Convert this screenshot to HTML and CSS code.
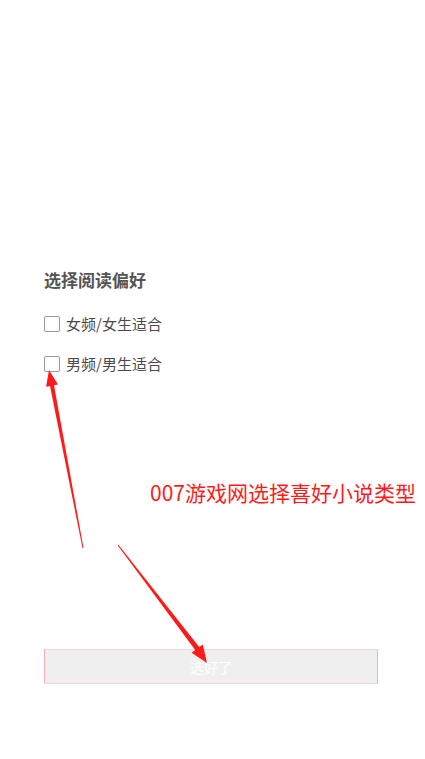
FILE: index.html
```html
<!DOCTYPE html>
<html>

<head>
  <meta charset="UTF-8"/>
  <title>选择阅读偏好</title>
  <meta name="viewport" content="width=device-width, initial-scale=1">
  <link rel="stylesheet" href="styles.css">
</head>

<body>
  <div id="ui_page" class="page">
    <div class="prefs">
      <h2 class="prefs-title">选择阅读偏好</h2>
      <label class="option">
        <input type="checkbox" class="option-input">
        <span class="option-box"></span>
        <span class="option-text">女频/女生适合</span>
      </label>
      <label class="option">
        <input type="checkbox" class="option-input">
        <span class="option-box"></span>
        <span class="option-text">男频/男生适合</span>
      </label>
    </div>
    <button class="done-button" disabled>选好了</button>

    <!-- annotation layer -->
    <div class="note">007游戏网选择喜好小说类型</div>
    <svg class="arrows" width="425" height="759" viewBox="0 0 425 759">
      <polygon fill="#ff1a1a" points="49,370 57.9,384.6 54,385.3 83.5,547.9 82.5,548.1 50,386.1 46.1,386.8"/>
      <polygon fill="#ff1a1a" points="207,663 191.6,652.8 195.2,650.1 117.6,545.3 118.4,544.7 199.2,647.1 202.8,644.4"/>
    </svg>
  </div>
</body>

</html>
```

FILE: styles.css
```css
html, body {
  width: 100%;
  height: 100%;
  margin: 0;
  border: 0;
  padding: 0;
}
body {
  background-color: #fff;
  font-family: "Noto Sans CJK SC", "Noto Sans", sans-serif;
  color: #555;
}

.page {
  position: relative;
  height: 100%;
  overflow: hidden;
}

.prefs {
  display: flex;
  flex-flow: column nowrap;
  align-items: flex-start;
  padding: 267px 44px 0 44px;
}
.prefs-title {
  margin: 0 0 20px 0;
  font-size: 17px;
  line-height: 26px;
  font-weight: bold;
  color: #555;
}

.option {
  display: flex;
  align-items: center;
  gap: 6px;
  height: 22px;
  margin-bottom: 18px;
  font-size: 15px;
  line-height: 22px;
  color: #4a4a4a;
}
.option-input {
  display: none;
}
.option-box {
  box-sizing: border-box;
  width: 16px;
  height: 16px;
  border: 1px solid #9a9a9a;
  border-radius: 2px;
  background-color: #fff;
}

.done-button {
  display: block;
  box-sizing: border-box;
  width: 334px;
  height: 35px;
  margin: 256px 0 0 44px;
  padding: 0;
  background-color: #efefef;
  border: 1px solid #f8d4d4;
  border-left-color: #f4b0b0;
  border-right-color: #f4b0b0;
  color: #fff;
  font-family: inherit;
  font-size: 14px;
}

.note {
  position: absolute;
  left: 150px;
  top: 477px;
  font-size: 21px;
  line-height: 30px;
  color: #ff1a1a;
  white-space: nowrap;
}
.arrows {
  position: absolute;
  left: 0;
  top: 0;
  pointer-events: none;
}
```
